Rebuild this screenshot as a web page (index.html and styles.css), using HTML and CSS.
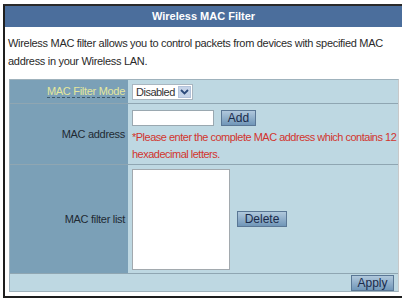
FILE: index.html
```html
<!DOCTYPE html>
<html>
<head>
<meta charset="utf-8">
<link rel="stylesheet" href="styles.css">
</head>
<body>
<div class="frame">
  <div class="header">Wireless MAC Filter</div>
  <div class="desc">Wireless MAC filter allows you to control packets from devices with specified MAC address in your Wireless LAN.</div>
  <div class="form">
    <div class="row r1">
      <div class="label"><span class="hint">MAC Filter Mode</span></div>
      <div class="value">
        <div class="select"><span class="sel-text">Disabled</span><span class="sel-arrow"><svg width="9" height="6" viewBox="0 0 9 6"><path d="M1 1 L4.5 4.5 L8 1" fill="none" stroke="#2c4a7a" stroke-width="1.8"/></svg></span></div>
      </div>
    </div>
    <div class="row r2">
      <div class="label">MAC address</div>
      <div class="value col">
        <div class="inline"><div class="input"></div><div class="btn add">Add</div></div>
        <div class="warn">*Please enter the complete MAC address which contains 12 hexadecimal letters.</div>
      </div>
    </div>
    <div class="row r3">
      <div class="label">MAC filter list</div>
      <div class="value center">
        <div class="listbox"></div>
        <div class="btn del">Delete</div>
      </div>
    </div>
    <div class="row r4">
      <div class="apply-cell"><div class="btn apply">Apply</div></div>
    </div>
  </div>
</div>
</body>
</html>
```
FILE: styles.css
```css
html, body { margin: 0; padding: 0; background: #fff; }
body { font-family: "Liberation Sans", Arial, sans-serif; font-size: 11px; letter-spacing: -0.3px; color: #222; }
.frame {
  margin: 4px 0 0 3px;
  width: 399px;
  border-left: 2px solid #1e1e1e;
  border-top: 2px solid #2a2a2a;
  border-bottom: 2px solid #1e1e1e;
  height: 294px;
  box-sizing: border-box;
  background: #fff;
  display: flex;
  flex-direction: column;
}
.header {
  height: 21px;
  line-height: 21px;
  background: #4b6e9c;
  color: #fff;
  font-weight: bold;
  font-size: 11px;
  letter-spacing: 0;
  text-align: center;
}
.desc {
  padding: 7px 4px 0 3px;
  line-height: 18px;
  height: 45px;
  color: #2a2a2a;
}
.form {
  margin: 0 3px 4px 4px;
  border: 1px solid #9fb2bc;
  border-right-color: #c8c8c8;
  display: flex;
  flex-direction: column;
  flex: 1;
}
.row { display: flex; border-bottom: 1px solid #8fa6b2; }
.row:last-child { border-bottom: none; }
.label {
  width: 118px;
  background: #7ba0b7;
  padding-right: 3px;
  box-sizing: border-box;
  display: flex;
  align-items: center;
  justify-content: flex-end;
  color: #1f2a33;
}
.value {
  flex: 1;
  background: #bed8e2;
  padding: 0 0 0 4px;
  display: flex;
  align-items: center;
}
.value.col { flex-direction: column; align-items: flex-start; justify-content: flex-start; }
.r1 { height: 23px; }
.r2 { height: 60px; }
.r3 { height: 108px; }
.r4 { flex: 1; }
.hint { color: #e6e89c; border-bottom: 1px dashed #3f5a6a; line-height: 12px; }
.select {
  width: 61px; height: 16px;
  background: #fff;
  border: 1px solid #a9b6c0;
  display: flex; align-items: center;
  box-sizing: border-box;
  padding-right: 1px;
}
.sel-text { flex: 1; padding-left: 3px; color: #333; white-space: nowrap; overflow: hidden; letter-spacing: -0.5px; }
.sel-arrow {
  flex: none;
  width: 13px; height: 12px;
  background: #c5d3e8;
  border: 1px solid #b2c2da;
  box-sizing: border-box;
  display: flex; align-items: center; justify-content: center;
}
.sel-arrow svg { display: block; }
.inline { display: flex; align-items: center; margin-top: 6px; gap: 7px; }
.input { width: 82px; height: 16px; background: #fff; border: 1px solid #9aa8b0; box-sizing: border-box; }
.btn {
  background: linear-gradient(#b0c8dc, #7096b8);
  border: 1px solid #5a7795;
  color: #1a2a4a;
  text-align: center;
  box-sizing: border-box;
  font-size: 12px;
  letter-spacing: 0;
  line-height: 14px;
}
.add { width: 35px; height: 16px; }
.warn { color: #d2352e; line-height: 17px; margin-top: 3px; padding-right: 0; letter-spacing: -0.5px; }
.value.center { align-items: center; padding-left: 4px; }
.listbox { width: 98px; height: 101px; background: #fff; border: 1px solid #a2a9ae; box-sizing: border-box; }
.del { width: 50px; height: 16px; margin-left: 7px; }
.apply-cell { flex: 1; background: #bed8e2; display: flex; justify-content: flex-end; align-items: center; padding-right: 4px; }
.apply { width: 43px; height: 16px; }
```
